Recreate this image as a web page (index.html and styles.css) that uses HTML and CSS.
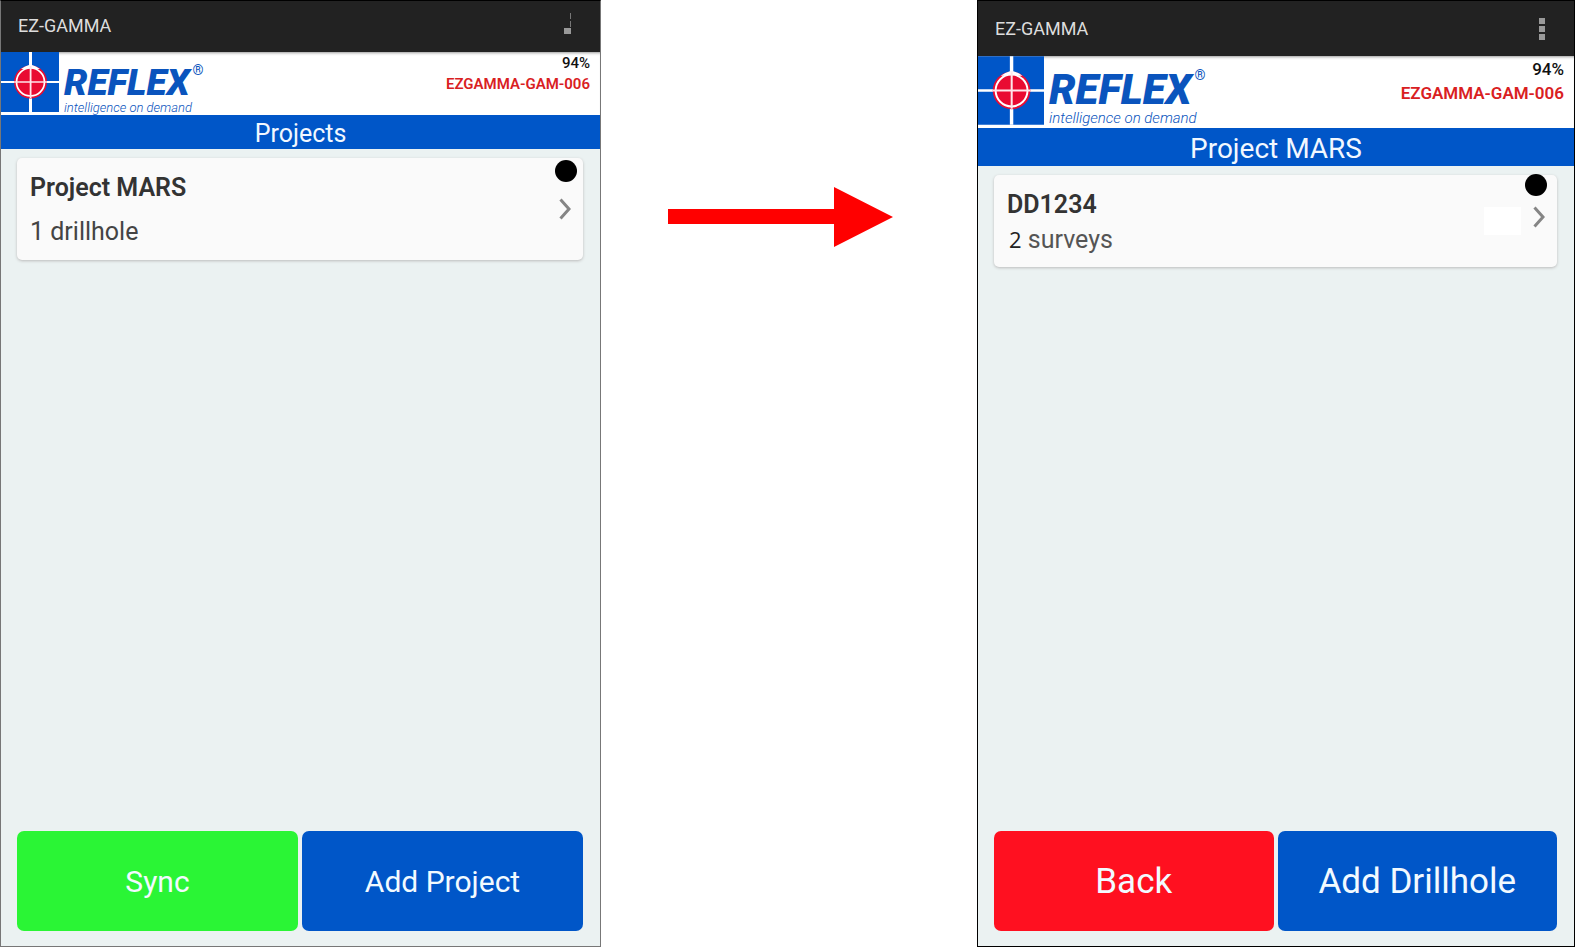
FILE: index.html
```html
<!DOCTYPE html>
<html lang="en">
<head>
<meta charset="utf-8">
<title>EZ-GAMMA</title>
<link rel="stylesheet" href="styles.css">
</head>
<body>
<main class="flow">
  <section class="phone phone-projects">
    <header class="appbar">
      <span>EZ-GAMMA</span>
      <button class="menu" aria-label="Menu">
        <svg width="8" height="24" viewBox="0 0 8 24"><path d="M6.500 0v6M6.500 8v6" stroke="#777" fill="none"/><path d="M0 15h7v6H0z" fill="#999"/></svg>
      </button>
    </header>
    <div class="brand">
      <svg class="mark" viewBox="0 0 58 60" aria-hidden="true">
        <path fill="#0056c8" d="M0 0h58v60H0z"/>
        <path fill="#fff" d="M28 0h3v60h-3zM0 29h58v2H0z"/>
        <circle cx="29.5" cy="30" r="16.5" fill="#e90b32"/>
        <path fill="#fff" d="M20 17q4-3 8-4h3q4 1 8 4l-4 0q-5-2-11 0z"/>
        <circle cx="29.5" cy="30" r="14" fill="none" stroke="#fff" stroke-width="1.7"/>
        <path fill="#ffe6ea" d="M28.700 14h1.800v32h-1.800zM13 29.200h33v1.600H13z"/>
      </svg>
      <div class="logo"><div class="name">REFLEX<span class="reg">®</span></div><div class="tag">intelligence on demand</div></div>
      <div class="status"><div>94%</div><div class="device">EZGAMMA-GAM-006</div></div>
    </div>
    <h1 class="title">Projects</h1>
    <div class="content">
      <a class="card" href="#drillholes">
        <div class="info"><h2>Project MARS</h2><p>1 drillhole</p></div>
        <svg class="chevron" viewBox="0 0 12 22"><path d="M1.500 1.500 10 11 1.500 20.500" fill="none" stroke="#858585" stroke-width="3"/></svg>
        <span class="dot"></span>
      </a>
      <div class="actions"><button class="sync">Sync</button><button class="add">Add Project</button></div>
    </div>
  </section>

  <div class="between">
    <svg class="arrow" viewBox="0 0 226 60" role="img" aria-label="Next"><path fill="#f00" d="M0 22h166V0l59 30-59 30V37H0z"/></svg>
  </div>

  <section class="phone phone-drillholes">
    <header class="appbar">
      <span>EZ-GAMMA</span>
      <button class="menu" aria-label="Menu">
        <svg width="8" height="24" viewBox="0 0 8 24"><path d="M1 1h6v6H1zM1 9h6v6H1zM1 17h6v6H1z" fill="#999"/></svg>
      </button>
    </header>
    <div class="brand">
      <svg class="mark" viewBox="0 0 58 60" aria-hidden="true">
        <path fill="#0056c8" d="M0 0h58v60H0z"/>
        <path fill="#fff" d="M28 0h3v60h-3zM0 29h58v2H0z"/>
        <circle cx="29.5" cy="30" r="16.5" fill="#e90b32"/>
        <path fill="#fff" d="M20 17q4-3 8-4h3q4 1 8 4l-4 0q-5-2-11 0z"/>
        <circle cx="29.5" cy="30" r="14" fill="none" stroke="#fff" stroke-width="1.7"/>
        <path fill="#ffe6ea" d="M28.700 14h1.800v32h-1.800zM13 29.200h33v1.600H13z"/>
      </svg>
      <div class="logo"><div class="name">REFLEX<span class="reg">®</span></div><div class="tag">intelligence on demand</div></div>
      <div class="status"><div>94%</div><div class="device">EZGAMMA-GAM-006</div></div>
    </div>
    <h1 class="title">Project MARS</h1>
    <div class="content">
      <a class="card" href="#surveys">
        <div class="info"><h2>DD1234</h2><p class="surveys"><span class="count">2</span> surveys</p></div>
        <span class="patch"></span>
        <svg class="chevron" viewBox="0 0 12 22"><path d="M1.500 1.500 10 11 1.500 20.500" fill="none" stroke="#858585" stroke-width="3"/></svg>
        <span class="dot"></span>
      </a>
      <div class="actions"><button class="back">Back</button><button class="add">Add Drillhole</button></div>
    </div>
  </section>
</main>
</body>
</html>
```
FILE: styles.css
```css
* { box-sizing: border-box; }
body { margin: 0; background: #fff; font-family: Roboto, sans-serif; }
h1, h2, p { margin: 0; font-weight: 400; }
button { border: 0; padding: 0; font: inherit; }
svg { display: block; }

.flow {
  display: grid;
  grid-template-columns: 601fr 376fr 598fr;
  min-height: 100vh;
  padding-bottom: 5px;
}
.phone {
  display: flex;
  flex-direction: column;
  border: 1px solid #777;
  border-top-color: #000;
  background: #ebf2f2;
}
.phone-projects {
  --bar: 51px;
  --bar-bottom: 3px;
  --brand: 63px;
  --mark: 58px;
  --title: 34px;
  --title-size: 25px;
  --name: 37px;
  --name-line: 37px;
  --name-top: 12px;
  --tag: 13px;
  --tag-line: 14px;
  --status: 15px;
  --status-line: 21px;
  --action: 30px;
  --card-h: 102px;
  --row: 44px;
}
.phone-drillholes {
  --bar: 55px;
  --bar-bottom: 0px;
  --brand: 72px;
  --mark: 66px;
  --title: 38px;
  --title-size: 28px;
  --name: 42px;
  --name-line: 41px;
  --name-top: 13px;
  --tag: 15px;
  --tag-line: 17px;
  --status: 17px;
  --status-line: 24px;
  --action: 35px;
  --card-h: 92px;
  --row: 34px;
  border-color: #000;
}

.appbar {
  display: flex;
  align-items: center;
  justify-content: space-between;
  height: var(--bar);
  padding: 0 28px var(--bar-bottom) 17px;
  background: #222;
  color: #ddd;
  font-size: 18px;
}
.menu { background: none; }

.brand {
  display: flex;
  height: var(--brand);
  background: #fff;
  box-shadow: inset 0 3px 3px -2px #999;
}
.mark { width: var(--mark); height: calc(var(--brand) - 3px); }
.logo {
  padding: var(--name-top) 0 0 5px;
  color: #0a54bd;
  font-style: italic;
  white-space: nowrap;
}
.name {
  display: flex;
  gap: 3px;
  font-size: var(--name);
  font-weight: 900;
  line-height: var(--name-line);
}
.reg { font-size: 14px; font-weight: 400; font-style: normal; line-height: 12px; }
.tag { font-size: var(--tag); font-weight: 300; line-height: var(--tag-line); }
.status {
  margin-left: auto;
  padding: 1px 10px 0 0;
  color: #111;
  font-size: var(--status);
  font-weight: 500;
  line-height: var(--status-line);
  text-align: right;
}
.device { color: #d9201f; font-weight: 600; }

.title {
  height: var(--title);
  background: #0056c8;
  color: #f2f8ff;
  font-size: var(--title-size);
  line-height: calc(var(--title) + 4px);
  text-align: center;
}
.content {
  display: flex;
  flex: 1;
  flex-direction: column;
  justify-content: space-between;
  padding: 9px 17px 15px 16px;
}
.card {
  position: relative;
  display: flex;
  align-items: center;
  gap: 12px;
  height: var(--card-h);
  padding: 0 12px 0 13px;
  border-radius: 5px;
  background: #fafafa;
  box-shadow: 0 1px 3px #bbb;
  color: #444;
  text-decoration: none;
}
.info { flex: 1; padding-top: 2px; font-size: 25px; line-height: var(--row); }
.info h2 { color: #333; font-size: 25px; font-weight: 600; }
.surveys { padding-left: 2px; color: #555; }
.count { color: #222; font-family: "Open Sans", sans-serif; font-size: 22px; }
.patch { width: 37px; height: 28px; background: #fff; }
.chevron { width: 12px; height: 22px; }
.phone-drillholes .chevron { margin-bottom: 8px; }
.dot {
  position: absolute;
  top: 2px;
  right: 6px;
  width: 22px;
  height: 22px;
  border-radius: 50%;
  background: #000;
}
.phone-drillholes .dot { right: 10px; top: -1px; }

.actions { display: grid; grid-template-columns: 1fr 1fr; gap: 4px; }
.actions button {
  height: 100px;
  border-radius: 7px;
  color: #f2faff;
  font-size: var(--action);
}
.sync { background: #2af535; }
.back { background: #ff1020; }
.add { background: #0056c8; }

.between { padding: 187px 83px 0 67px; }
.arrow { width: 100%; }
```
